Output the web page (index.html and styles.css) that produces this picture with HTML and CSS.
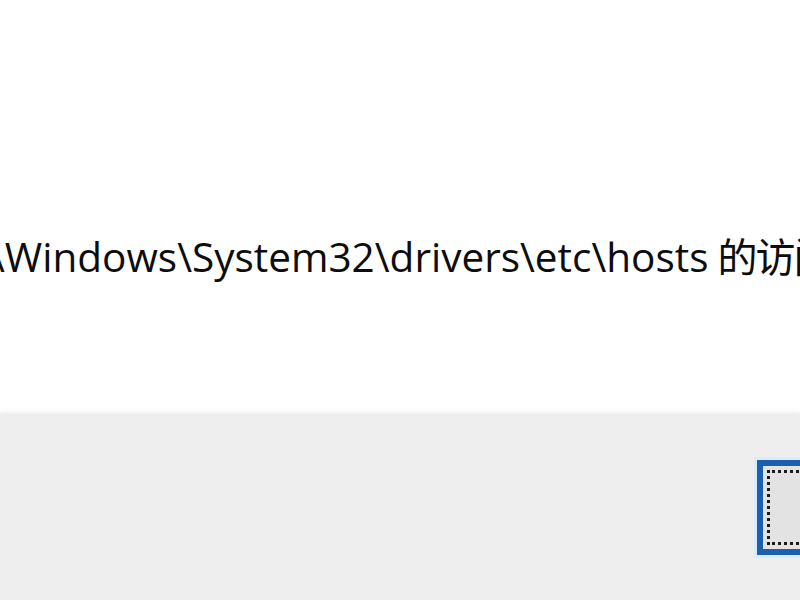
FILE: index.html
```html
<!DOCTYPE html>
<html lang="zh-CN">
<head>
<meta charset="utf-8">
<link rel="stylesheet" href="styles.css">
</head>
<body>
<div class="dialog">
  <div class="content">
    <p class="message">\Windows\System32\drivers\etc\hosts<span class="cjk">的访问被拒绝</span></p>
  </div>
  <div class="footer">
    <div class="button"><span class="focus"></span></div>
  </div>
</div>
</body>
</html>
```
FILE: styles.css
```css
html, body {
  margin: 0;
  padding: 0;
  width: 800px;
  height: 600px;
  overflow: hidden;
  background: #ffffff;
}
.dialog {
  display: flex;
  flex-direction: column;
  width: 800px;
  height: 600px;
}
.content {
  height: 412px;
  background: #ffffff;
  overflow: hidden;
  padding-top: 227px;
  box-sizing: border-box;
}
.message {
  margin: 0 0 0 -10px;
  white-space: nowrap;
  font-family: "Open Sans", "Noto Sans CJK SC", sans-serif;
  font-size: 40.5px;
  line-height: 57px;
  color: #0d0d0d;
}
.cjk {
  font-family: "Noto Sans CJK SC", sans-serif;
  font-size: 40px;
  margin-left: 9px;
  letter-spacing: -2px;
}
.footer {
  flex: 1;
  background: #eeeeee;
  box-shadow: 0 -4px 6px -2px rgba(0,0,0,0.03);
  border-top: 2px solid #f3f3f3;
  display: flex;
  justify-content: flex-end;
  padding-top: 46px;
  overflow: hidden;
}
.button {
  width: 80px;
  height: 75px;
  margin-right: -57px;
  border: 6px solid #1b5fae;
  background: #e3e3e3;
  box-shadow: 0 0 0 3px #d9ecfb;
  padding: 4px;
  flex-shrink: 0;
  align-self: flex-start;
}
.focus {
  display: block;
  height: 100%;
  border: 3px dotted #1a1a1a;
  box-sizing: border-box;
}
```
